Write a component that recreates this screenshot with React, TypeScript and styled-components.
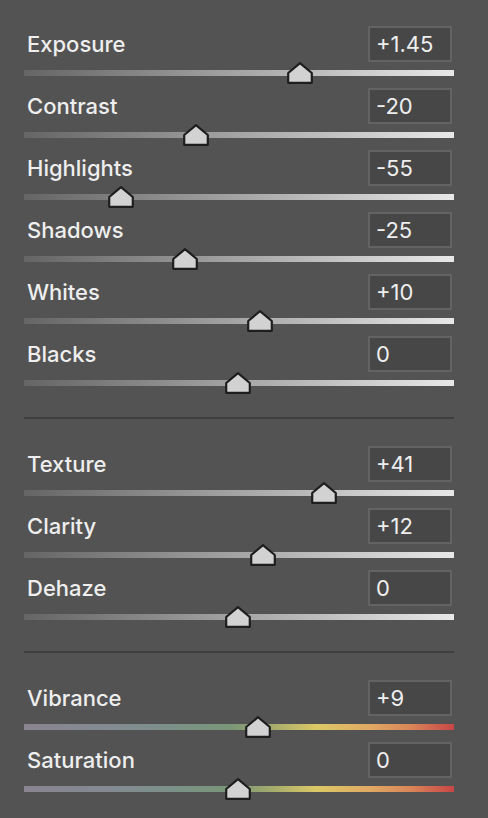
import React from "react";
import styled, { createGlobalStyle } from "styled-components";

const Global = createGlobalStyle`
  html, body { margin: 0; padding: 0; background: #535353; }
  body { font-family: Inter, "Liberation Sans", Arial, sans-serif; }
`;

const Panel = styled.div`
  width: 488px;
  height: 818px;
  box-sizing: border-box;
  background: #535353;
  padding: 26px 34px 0 24px;
  display: flex;
  flex-direction: column;
`;

const Section = styled.div`
  display: flex;
  flex-direction: column;
`;

const Divider = styled.div`
  height: 2px;
  background: #3f3f3f;
  margin: 19px 0 27px;
`;

const Row = styled.div`
  display: flex;
  flex-direction: column;
  padding-bottom: 12px;
`;

const Header = styled.div`
  display: flex;
  align-items: center;
  justify-content: space-between;
  height: 36px;
  margin-bottom: 8px;
`;

const Label = styled.span`
  font-size: 22px;
  font-weight: 500;
  color: #eeeeee;
  padding-left: 3px;
  line-height: 22px;
`;

const ValueBox = styled.div`
  width: 84px;
  height: 36px;
  box-sizing: border-box;
  border: 2px solid #636363;
  background: #474747;
  color: #eeeeee;
  font-size: 22px;
  line-height: 33px;
  padding-left: 6px;
  margin-right: 2px;
`;

const Track = styled.div<{ $color?: boolean }>`
  position: relative;
  height: 6px;
  background: ${(p) =>
    p.$color
      ? "linear-gradient(to right, #8a8590 0%, #838a92 20%, #7b9188 35%, #7a9678 48%, #a6ac6c 58%, #dcc866 68%, #e0aa64 80%, #d98558 90%, #c84646 100%)"
      : "linear-gradient(to right, #656565 0%, #8a8a8a 30%, #b2b2b2 60%, #e8e8e8 100%)"};
`;

const Thumb = styled.svg`
  position: absolute;
  top: -8px;
  width: 26px;
  height: 22px;
  margin-left: -13px;
  display: block;
`;

type Item = { label: string; value: string; pos: number; color?: boolean };

const sections: Item[][] = [
  [
    { label: "Exposure", value: "+1.45", pos: 276 },
    { label: "Contrast", value: "-20", pos: 172 },
    { label: "Highlights", value: "-55", pos: 97 },
    { label: "Shadows", value: "-25", pos: 161 },
    { label: "Whites", value: "+10", pos: 236 },
    { label: "Blacks", value: "0", pos: 214 },
  ],
  [
    { label: "Texture", value: "+41", pos: 300 },
    { label: "Clarity", value: "+12", pos: 239 },
    { label: "Dehaze", value: "0", pos: 214 },
  ],
  [
    { label: "Vibrance", value: "+9", pos: 234, color: true },
    { label: "Saturation", value: "0", pos: 214, color: true },
  ],
];

function Slider({ item }: { item: Item }) {
  return (
    <Row>
      <Header>
        <Label>{item.label}</Label>
        <ValueBox>{item.value}</ValueBox>
      </Header>
      <Track $color={item.color}>
        <Thumb viewBox="0 0 26 22" style={{ left: item.pos }}>
          <path
            d="M13 1.2 L24.8 11 L24.8 20.8 L1.2 20.8 L1.2 11 Z"
            fill="#d2d2d2"
            stroke="#1e1e1e"
            strokeWidth="2.2"
            strokeLinejoin="round"
          />
        </Thumb>
      </Track>
    </Row>
  );
}

export default function App() {
  return (
    <>
      <Global />
      <Panel>
        {sections.map((s, i) => (
          <React.Fragment key={i}>
            {i > 0 && <Divider />}
            <Section>
              {s.map((it) => (
                <Slider key={it.label} item={it} />
              ))}
            </Section>
          </React.Fragment>
        ))}
      </Panel>
    </>
  );
}
